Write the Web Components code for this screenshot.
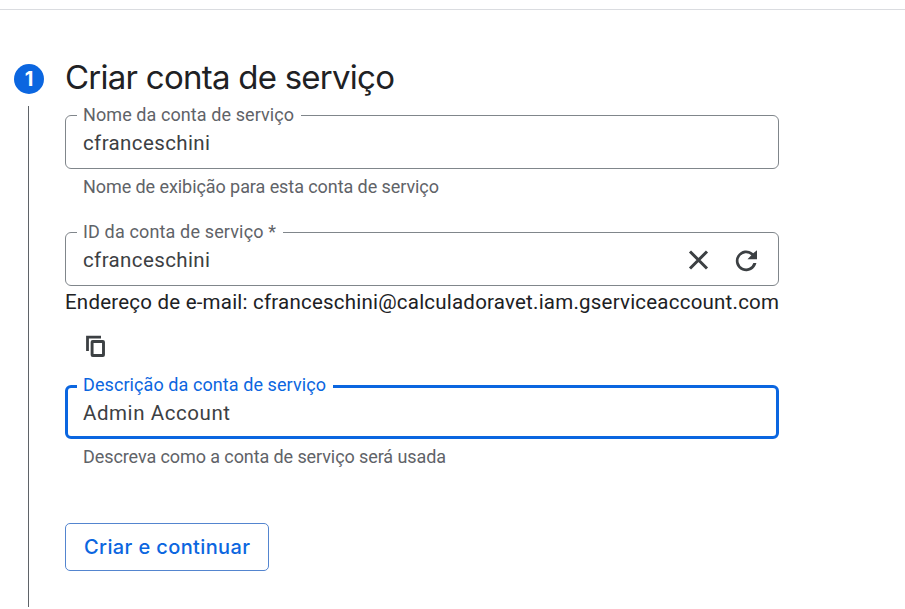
<!DOCTYPE html>
<html lang="pt-BR">
<head>
<meta charset="utf-8">
<title>Criar conta de serviço</title>
<style>
html, body { margin: 0; background: #fff; }
body { font-family: Roboto, "Liberation Sans", sans-serif; color: #202124; height: 609px; overflow: hidden; }
</style>
</head>
<body>
<account-page></account-page>
<script>
const define = (name, html, extra) => {
  const template = document.createElement('template');
  template.innerHTML = html;
  customElements.define(name, class extends HTMLElement {
    connectedCallback() {
      if (this.shadowRoot) return;
      this.attachShadow({ mode: 'open' }).append(template.content.cloneNode(true));
      if (extra) extra(this, this.shadowRoot);
    }
  });
};

// A single line of text tracked to the width given in its "span" attribute.
define('tracked-text', `<style>
  :host { display: inline-block; white-space: nowrap; }
  span { display: inline-block; }
</style><span><slot></slot></span>`, (host, root) => {
  const span = root.querySelector('span');
  const count = host.textContent.length;
  const gap = (Number(host.getAttribute('span')) - span.getBoundingClientRect().width) / (count - 1);
  span.style.letterSpacing = gap.toFixed(3) + 'px';
  span.style.marginRight = (-gap).toFixed(3) + 'px';
});

define('step-marker', `<style>
  :host { display: flex; flex-direction: column; align-items: center; width: 30px; height: 543px; }
  .dot { width: 30px; height: 30px; border-radius: 50%; background: #0b66e0; color: #fff;
    font: 700 20px/30px Inter, sans-serif; text-align: center; flex: none; }
  .line { width: 1px; flex: 1; margin-top: 12px; margin-right: 1px; background: #5f6368; }
</style><div class="dot"><slot></slot></div><div class="line"></div>`);

define('outlined-field', `<style>
  :host { display: block; --line: #80868b; --label: #5f6368; --w: 1px; --lh: 21px; --rh: 35px; }
  :host([focused]) { --line: #0b66e0; --label: #0b66e0; --w: 3px; --lh: 22px; --rh: 32px; }
  fieldset { box-sizing: border-box; height: 64px; margin: 0; min-width: 0; border: var(--w) solid var(--line);
    border-radius: 6px; padding: 0 19px 0 calc(12px - var(--w)); }
  legend { padding: 0 7px 0 6px; height: var(--lh); font-size: 18px; line-height: 20px; color: var(--label); }
  .row { display: flex; align-items: center; justify-content: space-between; padding-left: 6px; height: var(--rh); color: #3c4043; font-size: 20.5px; line-height: var(--rh); }
  .help { display: block; padding-left: 18px; font-size: 18px; line-height: 36px; color: #5f6368; }
  .icons { display: flex; gap: 24px; }
</style>
<fieldset><legend><slot name="label"></slot></legend>
<div class="row"><slot></slot><div class="icons"><slot name="icons"></slot></div></div></fieldset>
<div class="help"><slot name="help"></slot></div>`);

const icons = {
  close: ['0 0 24 24', '<path d="M3 2.5 20 19.5M20 2.5 3 19.5" fill="none" stroke="#3c4043" stroke-width="3"/>'],
  refresh: ['0 0 24 24', '<path d="M18.2 4.2A10.4 10.4 0 1 0 21.4 14H18.4A7.6 7.6 0 1 1 16.3 6.2L12.5 10.3H22V1.3Z" fill="#3c4043"/>'],
  copy: ['0 0 24 24', '<path d="M3.5 17V3.2H17" fill="none" stroke="#3c4043" stroke-width="2.8"/><rect x="8.1" y="7.5" width="11.4" height="14" rx=".6" fill="none" stroke="#3c4043" stroke-width="2.9"/>']
};
define('line-icon', `<style>
  :host { display: block; width: 24px; height: 24px; }
  svg { display: block; width: 100%; height: 100%; }
</style>`, (host, root) => {
  const [box, shapes] = icons[host.getAttribute('name')];
  root.innerHTML += `<svg viewBox="${box}" aria-hidden="true">${shapes}</svg>`;
});

define('outline-button', `<style>
  :host { display: block; width: 204px; }
  button { box-sizing: border-box; width: 100%; height: 48px; padding: 0; background: #fff; border: 1px solid #5485cf;
    border-radius: 5px; color: #0b66e0; font: 500 20px/46px Inter, sans-serif; }
</style><button><slot></slot></button>`);

define('account-page', `<style>
  :host { display: block; }
  .top { height: 9px; border-bottom: 1px solid #dadce0; }
  main { display: flex; gap: 21px; padding: 54px 0 0 14px; }
  section { width: 714px; }
  h1 { margin: 0; font: 400 33px/26px Inter, sans-serif; height: 41px; color: #202124; }
  .mail { font-size: 20.5px; line-height: 30px; color: #202124; height: 30px; }
  .copy { padding: 17px 0 0 19px; height: 58px; box-sizing: border-box; }
  .id { height: 64px; margin-top: 17px; margin-bottom: 1px; }
  outline-button { margin-top: 48px; }
</style>
<div class="top"></div>
<main>
  <step-marker>1</step-marker>
  <section>
    <h1><tracked-text span="330">Criar conta de serviço</tracked-text></h1>
    <outlined-field>
      <tracked-text slot="label" span="211">Nome da conta de serviço</tracked-text>
      <tracked-text span="127">cfranceschini</tracked-text>
      <tracked-text slot="help" span="356">Nome de exibição para esta conta de serviço</tracked-text>
    </outlined-field>
    <outlined-field class="id">
      <tracked-text slot="label" span="193">ID da conta de serviço *</tracked-text>
      <tracked-text span="127">cfranceschini</tracked-text>
      <line-icon slot="icons" name="close"></line-icon>
      <line-icon slot="icons" name="refresh"></line-icon>
    </outlined-field>
    <div class="mail"><tracked-text span="714">Endereço de e-mail: cfranceschini@calculadoravet.iam.gserviceaccount.com</tracked-text></div>
    <div class="copy"><line-icon name="copy"></line-icon></div>
    <outlined-field focused>
      <tracked-text slot="label" span="243">Descrição da conta de serviço</tracked-text>
      <tracked-text span="147">Admin Account</tracked-text>
      <tracked-text slot="help" span="363">Descreva como a conta de serviço será usada</tracked-text>
    </outlined-field>
    <outline-button><tracked-text span="166">Criar e continuar</tracked-text></outline-button>
  </section>
</main>`);
</script>
</body>
</html>
